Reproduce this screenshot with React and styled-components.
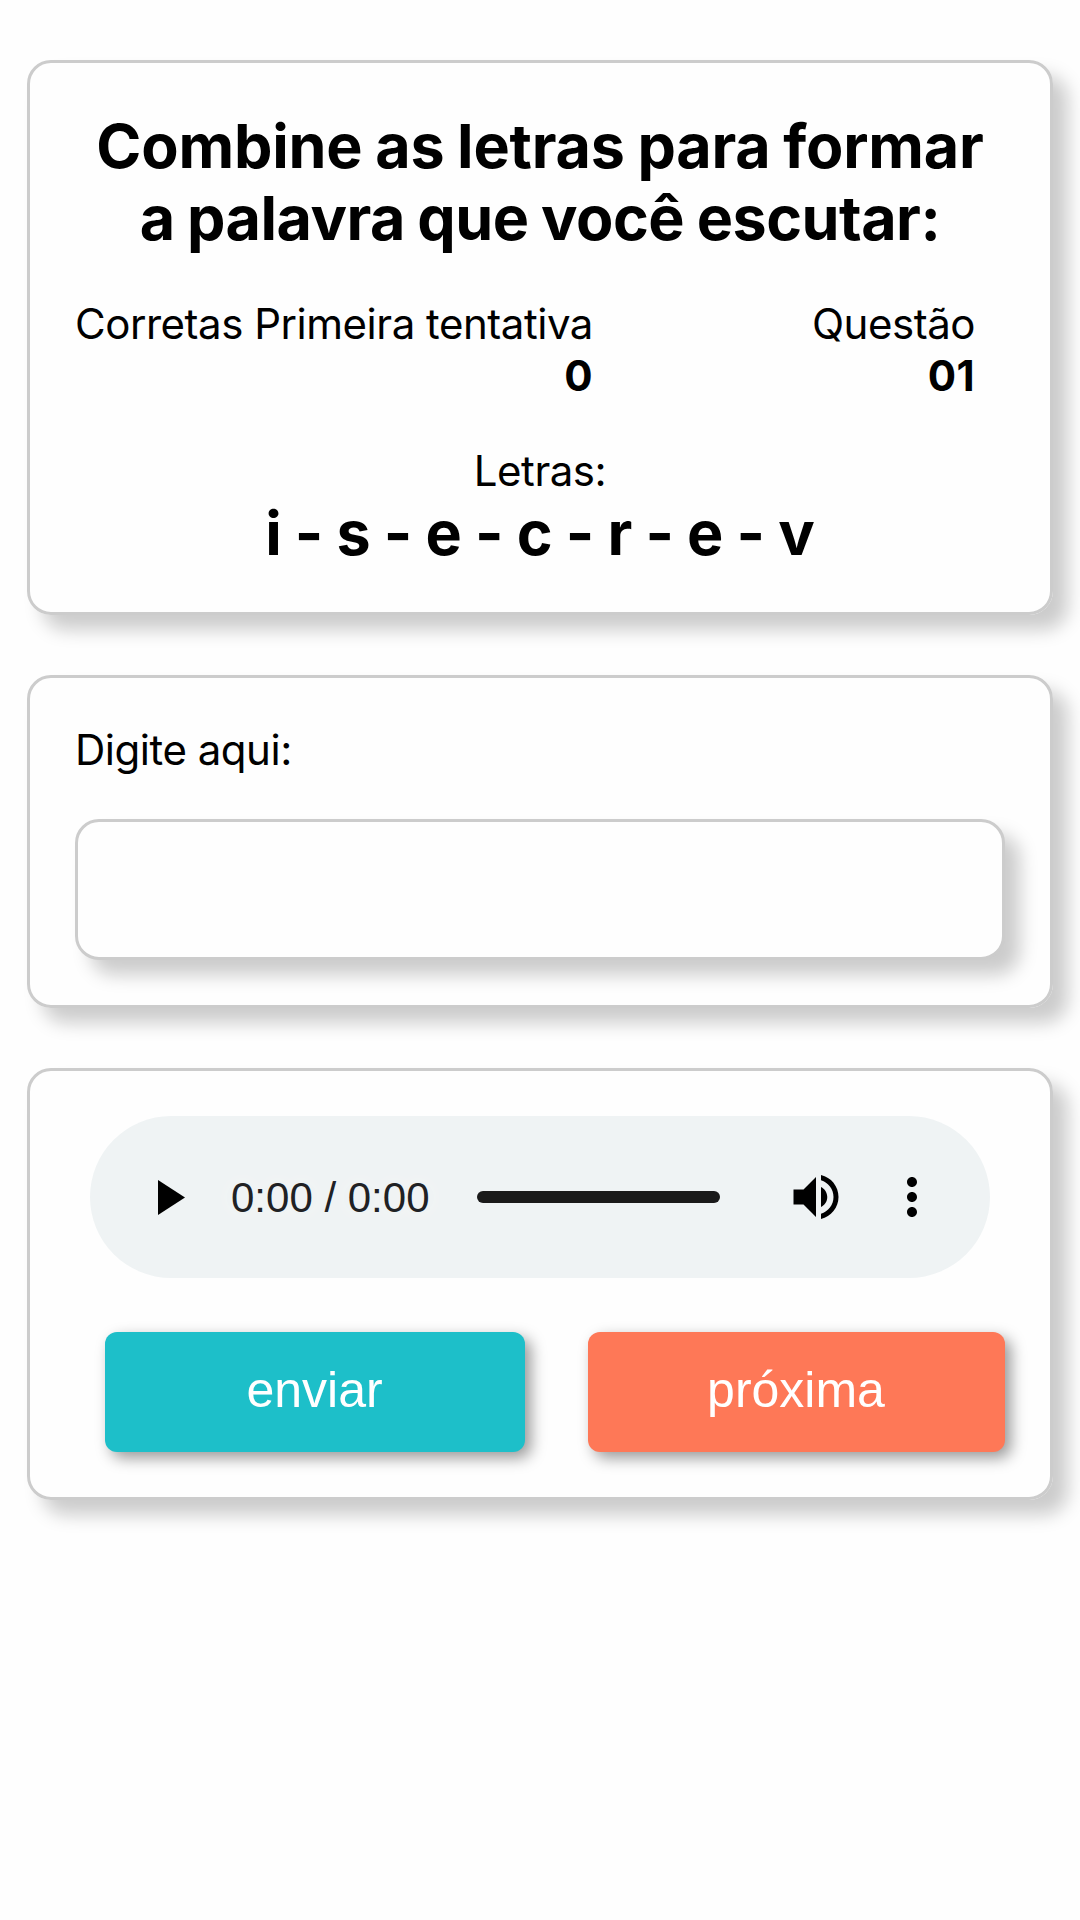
import React from "react";
import styled, { createGlobalStyle, css } from "styled-components";

const GlobalStyle = createGlobalStyle`
  * { box-sizing: border-box; }
  body { margin: 0; background: #fefefe; color: #000; font-family: Inter, "Liberation Sans", sans-serif; font-size: 42px; line-height: 51px; letter-spacing: -0.47px; }
`;

const Page = styled.main`
  display: flex;
  flex-direction: column;
  gap: 60px;
  padding: 60px 27px;
`;

const raised = css`
  border: 3px solid #ccc;
  border-radius: 24px;
  box-shadow: 15px 15px 18px #ccc;
`;

const Card = styled.section`
  ${raised}
  height: ${(p) => p.$height}px;
  padding: ${(p) => p.$top}px 45px 0;
`;

const Title = styled.h1`
  margin: 0;
  font-size: 61px;
  line-height: 72px;
  font-weight: 700;
  text-align: center;
  word-spacing: -1.5px;
  white-space: nowrap;
`;

const TitleLine = styled.span`
  display: block;
  letter-spacing: ${(p) => p.$tracking}px;
`;

const Stats = styled.dl`
  display: flex;
  justify-content: space-between;
  margin: 44px 30px 0 0;
`;

const Stat = styled.div`
  text-align: right;
`;

const StatLabel = styled.dt``;

const StatValue = styled.dd`
  margin: 0;
  padding-top: 1px;
  font-weight: 700;
  letter-spacing: 0.4px;
`;

const Letters = styled.div`
  margin-top: 44px;
  text-align: center;
`;

const LetterList = styled.strong`
  display: block;
  padding-top: 1px;
  font-size: 61px;
  line-height: 72px;
  font-weight: 700;
  letter-spacing: 0;
  word-spacing: -1.3px;
`;

const Label = styled.label`
  display: block;
`;

const Answer = styled.input`
  ${raised}
  display: block;
  width: 100%;
  height: 141px;
  margin-top: 44px;
  padding: 0 24px;
  background: #fefefe;
  font: inherit;
  outline: none;
`;

const Player = styled.div`
  display: flex;
  align-items: center;
  height: 162px;
  margin: 0 15px;
  padding-left: 68px;
  border-radius: 81px;
  background: #eff3f4;
`;

const Time = styled.span`
  width: 200px;
  margin-left: 46px;
  font-family: "Liberation Sans", Arial, sans-serif;
  font-size: 42px;
  letter-spacing: 0;
  color: #202124;
  white-space: nowrap;
  text-shadow: 0 0 30px #f5f5f5;
`;

const Track = styled.div`
  width: 243px;
  height: 12px;
  margin-left: 46px;
  border-radius: 6px;
  background: #1a1a1a;
`;

const PlayIcon = styled.svg`
  width: 27px;
  height: 35px;
`;

const ControlIcon = styled.svg`
  width: 60px;
  height: 60px;
  margin-left: ${(p) => p.$gap}px;
`;

const Actions = styled.div`
  display: flex;
  gap: 63px;
  margin: 54px 0 0 30px;
`;

const Button = styled.button`
  width: ${(p) => p.$width}px;
  height: 120px;
  padding: 0 1px 4px 0;
  border: 0;
  border-radius: 12px;
  background: ${(p) => p.$color};
  color: #fff;
  font-family: "Liberation Sans", Arial, sans-serif;
  font-size: 50px;
  letter-spacing: 0;
  box-shadow: 6px 6px 15px rgba(0, 0, 0, 0.4);
`;

export default function App() {
  return (
    <>
      <GlobalStyle />
      <Page>
        <Card $height={555} $top={47}>
          <Title>
            <TitleLine $tracking={-0.2}>Combine as letras para formar</TitleLine>
            <TitleLine $tracking={-0.5}>a palavra que você escutar:</TitleLine>
          </Title>
          <Stats>
            <Stat>
              <StatLabel>Corretas Primeira tentativa</StatLabel>
              <StatValue>0</StatValue>
            </Stat>
            <Stat>
              <StatLabel>Questão</StatLabel>
              <StatValue>01</StatValue>
            </Stat>
          </Stats>
          <Letters>
            Letras:
            <LetterList>i - s - e - c - r - e - v</LetterList>
          </Letters>
        </Card>
        <Card $height={333} $top={46}>
          <Label htmlFor="answer">Digite aqui:</Label>
          <Answer id="answer" />
        </Card>
        <Card $height={432} $top={45}>
          <Player>
            <PlayIcon viewBox="0 0 27 35">
              <path d="M0 0L27 17.5L0 35Z" />
            </PlayIcon>
            <Time>0:00 / 0:00</Time>
            <Track />
            <ControlIcon viewBox="0 0 24 24" $gap={66}>
              <path d="M3 9v6h4l5 5V4L7 9H3zm13.5 3c0-1.77-1.02-3.29-2.5-4.03v8.05c1.48-.73 2.5-2.25 2.5-4.02zM14 3.23v2.06c2.89.86 5 3.54 5 6.71s-2.11 5.85-5 6.71v2.06c4.01-.91 7-4.49 7-8.77s-2.99-7.86-7-8.77z" />
            </ControlIcon>
            <ControlIcon viewBox="0 0 24 24" $gap={36}>
              <path d="M12 8c1.1 0 2-.9 2-2s-.9-2-2-2-2 .9-2 2 .9 2 2 2zm0 2c-1.1 0-2 .9-2 2s.9 2 2 2 2-.9 2-2-.9-2-2-2zm0 6c-1.1 0-2 .9-2 2s.9 2 2 2 2-.9 2-2-.9-2-2-2z" />
            </ControlIcon>
          </Player>
          <Actions>
            <Button $width={420} $color="#1dbfc9">enviar</Button>
            <Button $width={417} $color="#fe7857">próxima</Button>
          </Actions>
        </Card>
      </Page>
    </>
  );
}
